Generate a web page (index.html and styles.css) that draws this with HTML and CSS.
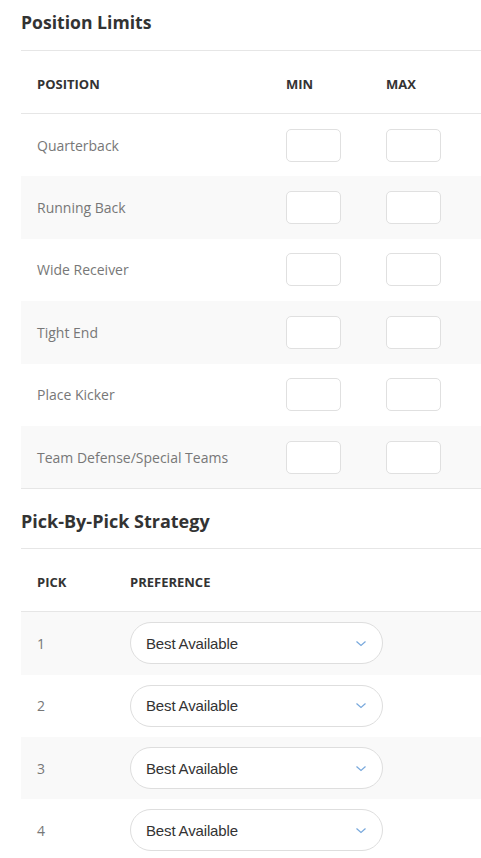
FILE: index.html
```html
<!DOCTYPE html>
<html>
<head>
<meta charset="utf-8">
<link rel="stylesheet" href="styles.css">
</head>
<body>
<div class="page">
  <h2 class="title">Position Limits</h2>
  <div class="limits">
    <div class="row head">
      <div class="cell">POSITION</div>
      <div class="cell">MIN</div>
      <div class="cell">MAX</div>
    </div>
    <div class="row">
      <div class="cell label">Quarterback</div>
      <div class="cell"><input class="num" type="text"></div>
      <div class="cell"><input class="num" type="text"></div>
    </div>
    <div class="row alt">
      <div class="cell label">Running Back</div>
      <div class="cell"><input class="num" type="text"></div>
      <div class="cell"><input class="num" type="text"></div>
    </div>
    <div class="row">
      <div class="cell label">Wide Receiver</div>
      <div class="cell"><input class="num" type="text"></div>
      <div class="cell"><input class="num" type="text"></div>
    </div>
    <div class="row alt">
      <div class="cell label">Tight End</div>
      <div class="cell"><input class="num" type="text"></div>
      <div class="cell"><input class="num" type="text"></div>
    </div>
    <div class="row">
      <div class="cell label">Place Kicker</div>
      <div class="cell"><input class="num" type="text"></div>
      <div class="cell"><input class="num" type="text"></div>
    </div>
    <div class="row alt last">
      <div class="cell label">Team Defense/Special Teams</div>
      <div class="cell"><input class="num" type="text"></div>
      <div class="cell"><input class="num" type="text"></div>
    </div>
  </div>

  <h2 class="title second">Pick-By-Pick Strategy</h2>
  <div class="picks">
    <div class="prow head">
      <div class="cell">PICK</div>
      <div class="cell">PREFERENCE</div>
    </div>
    <div class="prow alt">
      <div class="cell label">1</div>
      <div class="cell"><div class="select"><span>Best Available</span><svg class="chev" width="12" height="7" viewBox="0 0 12 7"><path d="M1.5 1.5 L6 5.5 L10.5 1.5" fill="none" stroke="#78a8dc" stroke-width="1.2"/></svg></div></div>
    </div>
    <div class="prow">
      <div class="cell label">2</div>
      <div class="cell"><div class="select"><span>Best Available</span><svg class="chev" width="12" height="7" viewBox="0 0 12 7"><path d="M1.5 1.5 L6 5.5 L10.5 1.5" fill="none" stroke="#78a8dc" stroke-width="1.2"/></svg></div></div>
    </div>
    <div class="prow alt">
      <div class="cell label">3</div>
      <div class="cell"><div class="select"><span>Best Available</span><svg class="chev" width="12" height="7" viewBox="0 0 12 7"><path d="M1.5 1.5 L6 5.5 L10.5 1.5" fill="none" stroke="#78a8dc" stroke-width="1.2"/></svg></div></div>
    </div>
    <div class="prow">
      <div class="cell label">4</div>
      <div class="cell"><div class="select"><span>Best Available</span><svg class="chev" width="12" height="7" viewBox="0 0 12 7"><path d="M1.5 1.5 L6 5.5 L10.5 1.5" fill="none" stroke="#78a8dc" stroke-width="1.2"/></svg></div></div>
    </div>
  </div>
</div>
</body>
</html>
```
FILE: styles.css
```css
html, body {
  margin: 0;
  padding: 0;
  background: #fff;
}
body {
  font-family: "Open Sans", "Noto Sans", sans-serif;
  color: #333;
  overflow: hidden;
}
.page {
  padding-left: 21px;
}
.title {
  margin: 0;
  font-size: 17.6px;
  font-weight: 700;
  color: #333;
  height: 51px;
  line-height: 45px;
  border-bottom: 1px solid #e6e6e6;
  box-sizing: border-box;
}
.title.second {
  height: 60px;
  line-height: 64px;
  font-size: 18px;
}
.row {
  display: grid;
  grid-template-columns: 249px 100px 1fr;
  height: 62.4px;
  align-items: center;
}
.prow {
  display: grid;
  grid-template-columns: 93px 1fr;
  height: 62.3px;
  align-items: center;
}
.row.head, .prow.head {
  height: 63px;
  padding-top: 4px;
  border-bottom: 1px solid #e6e6e6;
  box-sizing: border-box;
  font-size: 13px;
  font-weight: 700;
  color: #333;
}
.row.last {
  border-bottom: 1px solid #e6e6e6;
}
.alt {
  background: #f9f9f9;
}
.cell {
  padding-left: 16px;
}
.label {
  font-size: 14px;
  color: #777;
}
.num {
  display: block;
  width: 55px;
  height: 33px;
  box-sizing: border-box;
  border: 1.5px solid #e0e0e0;
  border-radius: 5px;
  background: #fff;
  margin: 0;
  padding: 0;
  outline: none;
}
.select {
  width: 253px;
  height: 42px;
  box-sizing: border-box;
  border: 1px solid #dedede;
  border-radius: 21px;
  background: #fff;
  display: flex;
  align-items: center;
  justify-content: space-between;
  padding: 0 15px 0 15px;
  font-family: "Liberation Sans", Arial, sans-serif;
  font-size: 15px;
  color: #333;
  letter-spacing: -0.15px;
}
.chev {
  display: block;
}
```
